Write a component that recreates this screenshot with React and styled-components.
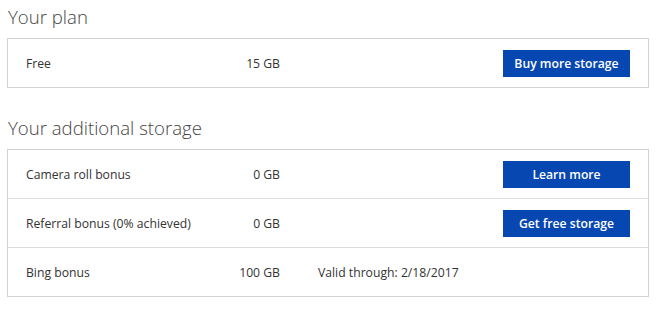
import React from "react";
import styled, { createGlobalStyle } from "styled-components";

const GlobalStyle = createGlobalStyle`
    body {
        margin:0;
        background:#fff;
        font-family:"Segoe UI", "Open Sans", "Liberation Sans", sans-serif;
        color:#333;
    }
`;

const plan = [{ label: "Free", value: "15 GB", action: "Buy more storage" }];

const extra = [
    { label: "Camera roll bonus", value: "0 GB", action: "Learn more" },
    { label: "Referral bonus (0% achieved)", value: "0 GB", action: "Get free storage" },
    { label: "Bing bonus", value: "100 GB", note: "Valid through: 2/18/2017" },
];

function Section({ title, rows }) {
    return (
        <Block>
            <Heading>{title}</Heading>
            <Card>
                {rows.map((r) => (
                    <Row key={r.label}>
                        <Label>{r.label}</Label>
                        <Value>{r.value}</Value>
                        <Note>{r.note}</Note>
                        {r.action ? <Action>{r.action}</Action> : <span />}
                    </Row>
                ))}
            </Card>
        </Block>
    );
}

export default function App() {
    return (
        <Page>
            <GlobalStyle />
            <Section title="Your plan" rows={plan} />
            <Section title="Your additional storage" rows={extra} />
        </Page>
    );
}

const Page = styled.div`
    width:642px;
    padding:0 12px 0 7px;
    display:flex;
    flex-direction:column;
    gap:23px;
`;

const Block = styled.section`
    display:flex;
    flex-direction:column;
`;

const Heading = styled.h2`
    margin:0;
    padding:3px 0 0 1px;
    height:35px;
    font-size:18.6px;
    line-height:28px;
    font-weight:300;
    color:#444;
`;

const Card = styled.div`
    border:1px solid #d2d2d2;
`;

const Row = styled.div`
    display:grid;
    grid-template-columns:194px 60px 1fr 127px;
    align-items:center;
    height:48px;
    padding:0 18px;
    font-size:12.2px;

    & + & {
        border-top:1px solid #dcdcdc;
    }
`;

const Label = styled.span``;

const Value = styled.span`
    text-align:right;
`;

const Note = styled.span`
    padding-left:38px;
`;

const Action = styled.button`
    height:27px;
    border:none;
    background:#0747b1;
    color:#fff;
    font-family:inherit;
    font-size:12.2px;
    font-weight:600;
    cursor:pointer;
`;
